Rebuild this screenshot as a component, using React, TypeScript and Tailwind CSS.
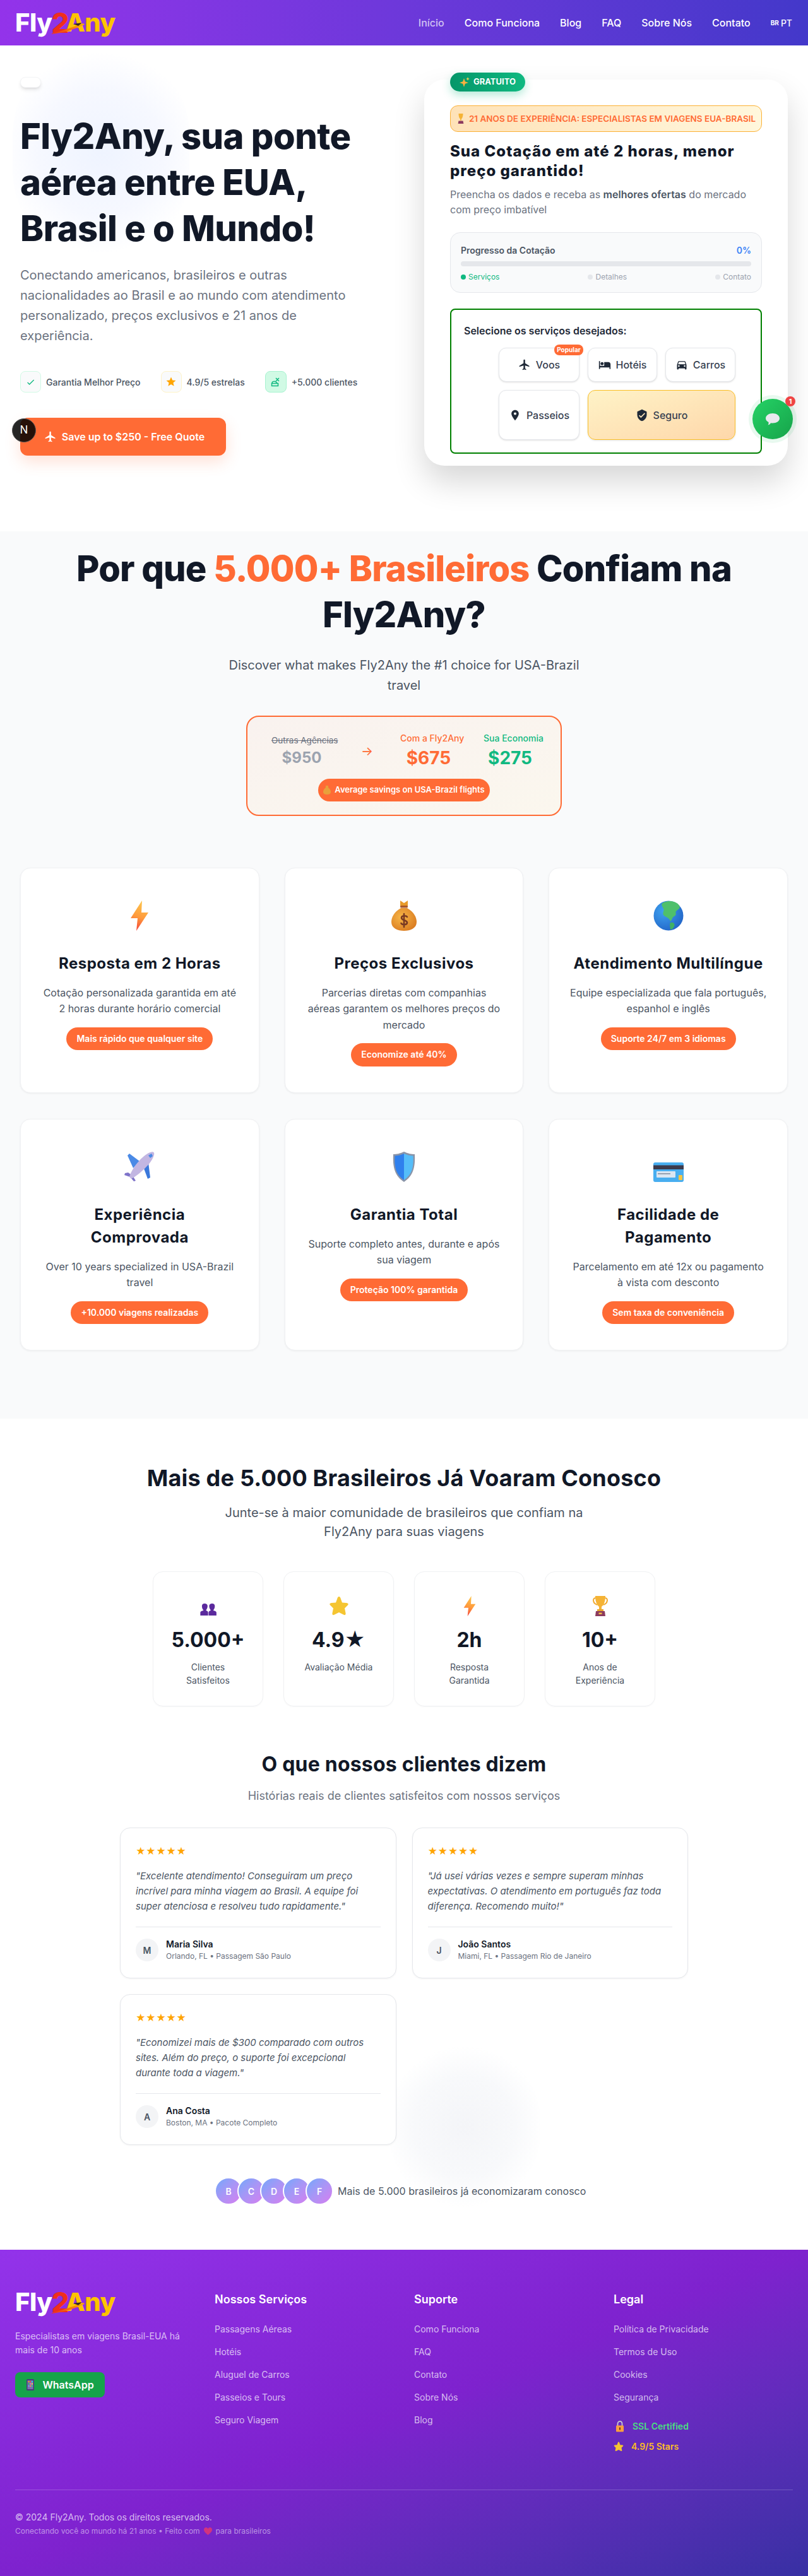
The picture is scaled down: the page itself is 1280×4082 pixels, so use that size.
import { MdFlight, MdHotel, MdDirectionsCar, MdPlace, MdVerifiedUser, MdCheck, MdStar } from "react-icons/md"

/* ---------- drawn emoji ---------- */
const Bolt = ({ id, size = 48 }: { id: string; size?: number }) => (
  <svg width={size} height={size} viewBox="0 0 48 48">
    <defs>
      <linearGradient id={id} x1="0.6" y1="0" x2="0.4" y2="1">
        <stop offset="0" stopColor="#fcc64d" />
        <stop offset="0.55" stopColor="#ff9a3c" />
        <stop offset="1" stopColor="#f4433a" />
      </linearGradient>
    </defs>
    <path d="M28 0 L10 28 L21 28 L19 48 L38 19 L27 19 Z" fill={`url(#${id})`} />
  </svg>
)

const MoneyBag = () => (
  <svg width="48" height="48" viewBox="0 0 48 48">
    <defs>
      <radialGradient id="bag" cx="0.4" cy="0.4" r="0.7">
        <stop offset="0" stopColor="#f7b748" />
        <stop offset="1" stopColor="#d9791f" />
      </radialGradient>
    </defs>
    <path d="M24 4 L18 0 L18 9 L30 9 L30 0 Z" fill="#e79a2b" />
    <rect x="18" y="8" width="12" height="3.500" rx="1.500" fill="#a8572a" />
    <path d="M19 12 C8 18 4 27 4 34 C4 44 14 48 24 48 C34 48 44 44 44 34 C44 27 40 18 29 12 Z" fill="url(#bag)" />
    <path d="M24 21 V42 M29 26 C27.500 23.500 20 23.500 20 27.500 C20 32 29 30.500 29 35 C29 39 21 39 19.500 36" fill="none" stroke="#7a3a22" strokeWidth="2.600" strokeLinecap="round" />
  </svg>
)

const Globe = () => (
  <svg width="48" height="48" viewBox="0 0 48 48">
    <defs>
      <radialGradient id="sea" cx="0.35" cy="0.35" r="0.8">
        <stop offset="0" stopColor="#3fa3f0" />
        <stop offset="1" stopColor="#1f5fc4" />
      </radialGradient>
    </defs>
    <circle cx="24" cy="24" r="23.500" fill="url(#sea)" />
    <path d="M14 4.500 C20 -0.500 36 -1 41 8 C44 13 38 14 36 17 C34 20 38 22 33 25 C29 27 30 31 27 33 C25 27 21 27 17 24 C13 20 18 17 16 13 C15 10 12 8 14 4.500 Z" fill="#4fc06b" />
    <path d="M27 35 C31 34 35 36 33 41 C32 44 29 46 27 46 C27 42 25 38 27 35 Z" fill="#3fb066" />
  </svg>
)

const Plane = () => (
  <svg width="48" height="48" viewBox="0 0 48 48">
    <path d="M24 15 L8 3 L5 6 L14 26 Z" fill="#4a8ae6" />
    <path d="M30 24 L37 43 L41 41 L38 17 Z" fill="#3a78db" />
    <path d="M6 33 L1 34 L0 37 L9 40 L15 47 L18 46 L13 38 Z" fill="#7e73c9" />
    <path d="M8 40 C12 26 28 6 41 1 C46 -1 48 1 47 5 C44 18 24 36 11 43 Z" fill="#c2b6e2" />
    <path d="M38 6 L43 3 L45 7 L41 10 Z" fill="#4a8ae6" />
  </svg>
)

const Shield = () => (
  <svg width="48" height="48" viewBox="0 0 48 48">
    <path d="M24 0 C31 3 35 4 41 4 C42 24 39 38 24 48 C9 38 6 24 7 4 C13 4 17 3 24 0 Z" fill="#8a94a8" />
    <path d="M24 3 V45 C11 36 8.500 24 9.500 6.500 C14 6.500 19 5.500 24 3 Z" fill="#2f80ed" />
    <path d="M24 3 V45 C37 36 39.500 24 38.500 6.500 C34 6.500 29 5.500 24 3 Z" fill="#55bdf9" />
  </svg>
)

const CreditCard = () => (
  <svg width="48" height="48" viewBox="0 0 48 48">
    <rect x="0" y="17" width="48" height="31" rx="3" fill="#48aef0" />
    <rect x="0" y="21.500" width="48" height="6.500" fill="#3c3a4c" />
    <rect x="5" y="31" width="30" height="10" rx="1" fill="#dbe6f2" />
    <rect x="7" y="34" width="20" height="1.800" fill="#8e99aa" />
    <rect x="40" y="37" width="6" height="8" rx="1" fill="#f5c542" />
  </svg>
)

const People = () => (
  <svg width="32" height="32" viewBox="0 0 32 32">
    <g transform="translate(2.500 10) scale(0.85 0.68)">
      <path d="M1 31 V24 C1 21 4 20 7 19 C5 16 4 13 4 9 C4 5 6 3 9 3 C12 3 14.500 5 14.500 9 C14.500 13 13 16 11.500 19 C14 20 15.500 21 15.500 24 V31 Z" fill="#5b2a9d" />
      <path d="M16.500 31 V24 C16.500 21 18 20 20.500 19 C19 16 17.500 13 17.500 9 C17.500 5 20 3 23 3 C26 3 28 5 28 9 C28 13 27 16 25 19 C28 20 31 21 31 24 V31 Z" fill="#5b2a9d" />
    </g>
  </svg>
)

const BigStar = ({ size = 32 }: { size?: number }) => (
  <svg width={size} height={size} viewBox="0 0 32 32">
    <path d="M16 1 C17.500 1 18 2 19 5 L21 10.500 L27.500 11 C30.500 11.300 31.500 12.500 30 14.500 L25 19.500 L26.500 27 C27 30 25.500 31 23 29.500 L16 26 L9 29.500 C6.500 31 5 30 5.500 27 L7 19.500 L2 14.500 C0.500 12.500 1.500 11.300 4.500 11 L11 10.500 L13 5 C14 2 14.500 1 16 1 Z" fill="#f5c531" />
  </svg>
)

const Trophy = () => (
  <svg width="32" height="32" viewBox="0 0 32 32">
    <path d="M9 3 C3 3 4 12 11 14 M23 3 C29 3 28 12 21 14" fill="none" stroke="#f0a92e" strokeWidth="2" />
    <path d="M8 0 H24 C24 10 21 15 18 17 L18 22 H14 L14 17 C11 15 8 10 8 0 Z" fill="#f5b335" />
    <rect x="11" y="21" width="10" height="3" fill="#e9a62c" />
    <path d="M9 24 H23 L24 32 H8 Z" fill="#8c3b5e" />
    <rect x="13.500" y="26.500" width="5" height="2.500" fill="#f0c04a" />
  </svg>
)

const SmallTrophy = () => (
  <svg width="14" height="16" viewBox="0 0 32 32" preserveAspectRatio="none">
    <path d="M8 0 H24 C24 10 21 15 18 17 L18 22 H14 L14 17 C11 15 8 10 8 0 Z" fill="#f5b335" />
    <path d="M8 23 H24 L26 32 H6 Z" fill="#8c3b5e" />
  </svg>
)

const Sparkles = () => (
  <svg width="16" height="16" viewBox="0 0 16 16">
    <path d="M7 2 L8.800 7.200 L14 9 L8.800 10.800 L7 16 L5.200 10.800 L0 9 L5.200 7.200 Z" fill="#fbb040" />
    <path d="M13 0 L13.800 2.200 L16 3 L13.800 3.800 L13 6 L12.200 3.800 L10 3 L12.200 2.200 Z" fill="#fcd34d" />
  </svg>
)

const Bubble = () => (
  <svg width="24" height="24" viewBox="0 0 24 24">
    <path d="M12 3 C18 3 23 6.500 23 11 C23 15.500 18 18.500 12 18.500 C11 18.500 10 18.400 9 18.200 C8 20 6.500 21 4.500 21.500 C5.500 20 5.800 18.500 5.500 17 C2.800 15.600 1 13.500 1 11 C1 6.500 6 3 12 3 Z" fill="#e8e9ee" />
  </svg>
)

const Lock = () => (
  <svg width="14" height="18" viewBox="0 0 14 18">
    <path d="M3.500 8 V5 C3.500 -0.500 10.500 -0.500 10.500 5 V8" fill="none" stroke="#c9cbd1" strokeWidth="1.800" />
    <rect x="1" y="7.500" width="12" height="10" rx="1" fill="#f9a03f" />
    <rect x="6" y="10.500" width="2" height="4" fill="#6b3a1e" />
  </svg>
)

const Phone = () => (
  <svg width="14" height="18" viewBox="0 0 14 18">
    <rect x="1" y="0" width="12" height="18" rx="1.500" fill="#49397c" />
    <rect x="2.500" y="2" width="9" height="14" fill="#7c6fb0" />
    <rect x="3.500" y="3" width="2" height="2" fill="#f59e0b" />
    <rect x="6.200" y="3" width="2" height="2" fill="#ef4444" />
    <rect x="9" y="3" width="2" height="2" fill="#22d3ee" />
    <rect x="3.500" y="6.500" width="2" height="2" fill="#22c55e" />
    <rect x="6.200" y="6.500" width="2" height="2" fill="#f472b6" />
    <rect x="9" y="6.500" width="2" height="2" fill="#fde047" />
    <rect x="3.500" y="10" width="2" height="2" fill="#60a5fa" />
    <rect x="6.200" y="10" width="2" height="2" fill="#fb923c" />
    <rect x="9" y="10" width="2" height="2" fill="#34d399" />
  </svg>
)

const Heart = () => (
  <svg width="13" height="12" viewBox="0 0 13 12">
    <path d="M6.500 12 C2 8.500 0 6.500 0 3.500 C0 1.300 1.700 0 3.300 0 C4.700 0 5.800 0.800 6.500 2 C7.200 0.800 8.300 0 9.700 0 C11.300 0 13 1.300 13 3.500 C13 6.500 11 8.500 6.500 12 Z" fill="#d1347f" />
  </svg>
)

/* logo is a picture in the site, here text + swoosh */
const Logo = ({ id }: { id: string }) => (
  <div className="relative flex items-center h-9 w-[158px] font-extrabold text-[40px] tracking-[-0.500px] leading-none">
    <span className="text-white">Fly</span>
    <span className="text-[#ef2f1c] text-[44px] -ml-px">2</span>
    <span className="text-[#fdc300] -ml-[5px]">Any</span>
    <svg className="absolute left-[56px] top-[14px]" width="56" height="22" viewBox="0 0 56 22">
      <defs>
        <linearGradient id={id} x1="0" y1="1" x2="1" y2="0">
          <stop offset="0" stopColor="#ef2f1c" />
          <stop offset="1" stopColor="#fdb400" />
        </linearGradient>
      </defs>
      <path d="M2 21 C16 18 32 12 52 5 L54 7 C38 14 22 20 2 22 Z" fill={`url(#${id})`} />
      <path d="M36 6 L50 4 L44 9 Z" fill="#3a2a1a" />
    </svg>
  </div>
)

const navLinks = ["Início", "Como Funciona", "Blog", "FAQ", "Sobre Nós", "Contato"]

const features = [
  { icon: <Bolt id="bolt-a" />, title: "Resposta em 2 Horas", text: "Cotação personalizada garantida em até 2 horas durante horário comercial", tag: "Mais rápido que qualquer site" },
  { icon: <MoneyBag />, title: "Preços Exclusivos", text: "Parcerias diretas com companhias aéreas garantem os melhores preços do mercado", tag: "Economize até 40%" },
  { icon: <Globe />, title: "Atendimento Multilíngue", text: "Equipe especializada que fala português, espanhol e inglês", tag: "Suporte 24/7 em 3 idiomas" },
  { icon: <Plane />, title: "Experiência\nComprovada", text: "Over 10 years specialized in USA-Brazil travel", tag: "+10.000 viagens realizadas" },
  { icon: <Shield />, title: "Garantia Total", text: "Suporte completo antes, durante e após sua viagem", tag: "Proteção 100% garantida" },
  { icon: <CreditCard />, title: "Facilidade de\nPagamento", text: "Parcelamento em até 12x ou pagamento à vista com desconto", tag: "Sem taxa de conveniência" },
]

const stats = [
  { icon: <People />, value: "5.000+", label: "Clientes Satisfeitos" },
  { icon: <BigStar />, value: "4.9★", label: "Avaliação Média" },
  { icon: <Bolt id="bolt-b" size={32} />, value: "2h", label: "Resposta Garantida" },
  { icon: <Trophy />, value: "10+", label: "Anos de Experiência" },
]

const reviews = [
  { quote: "\"Excelente atendimento! Conseguiram um preço incrível para minha viagem ao Brasil. A equipe foi super atenciosa e resolveu tudo rapidamente.\"", name: "Maria Silva", info: "Orlando, FL • Passagem São Paulo" },
  { quote: "\"Já usei várias vezes e sempre superam minhas expectativas. O atendimento em português faz toda diferença. Recomendo muito!\"", name: "João Santos", info: "Miami, FL • Passagem Rio de Janeiro" },
  { quote: "\"Economizei mais de $300 comparado com outros sites. Além do preço, o suporte foi excepcional durante toda a viagem.\"", name: "Ana Costa", info: "Boston, MA • Pacote Completo" },
]

const footerCols = [
  { title: "Nossos Serviços", links: ["Passagens Aéreas", "Hotéis", "Aluguel de Carros", "Passeios e Tours", "Seguro Viagem"] },
  { title: "Suporte", links: ["Como Funciona", "FAQ", "Contato", "Sobre Nós", "Blog"] },
  { title: "Legal", links: ["Política de Privacidade", "Termos de Uso", "Cookies", "Segurança"] },
]

const ServiceBtn = ({ icon, label, className }: { icon: React.ReactNode; label: string; className: string }) => (
  <div className={`relative flex items-center justify-center gap-2 rounded-xl text-[16px] font-medium text-[#374151] ${className}`}>
    {icon}
    {label}
  </div>
)

export default function App() {
  return (
    <div className="relative w-[1280px] h-[4082px] overflow-hidden bg-white font-['Inter',sans-serif]">
      {/* HEADER */}
      <header className="h-[72px] flex items-center justify-between pl-6 pr-[25px] bg-gradient-to-r from-[#9333ea] to-[#4338ca]">
        <Logo id="swoosh-top" />
        <nav className="flex items-center gap-8 text-[16px] font-medium text-white">
          {navLinks.map((l, i) => (
            <span key={l} className={i === 0 ? "text-white/70" : ""}>{l}</span>
          ))}
          <span className="text-[14px] flex items-center gap-[3px]"><span className="text-[10px] font-bold">BR</span> PT</span>
        </nav>
      </header>

      {/* HERO */}
      <section className="relative flex gap-16 px-8 pt-[50px] h-[770px]">
        <div className="absolute left-[20px] top-[0px] w-[280px] h-[340px] rounded-full bg-[radial-gradient(circle,#eff4ff_0%,#f6f8ff_45%,#ffffff_72%)]" />
        <div className="relative w-[576px]">
          <div className="w-[33px] h-[17px] rounded-lg bg-white border border-[#f3f4f6] shadow-md" />
          <h1 className="mt-[41px] text-[56px] leading-[72.800px] font-extrabold tracking-[-0.500px] text-[#111827]">
            Fly2Any, sua ponte aérea entre EUA, Brasil e o Mundo!
          </h1>
          <p className="mt-[22px] max-w-[540px] text-[20px] leading-8 text-[#6b7280]">
            Conectando americanos, brasileiros e outras nacionalidades ao Brasil e ao mundo com atendimento personalizado, preços exclusivos e 21 anos de experiência.
          </p>
          <div className="mt-10 flex items-center gap-8 text-[14px] font-medium text-[#4b5563]">
            <div className="flex items-center gap-2">
              <span className="w-[33px] h-[34px] rounded-lg border border-[#d1fae5] bg-[#f9fafb] flex items-center justify-center"><MdCheck className="text-[#10b981]" size={15} /></span>
              Garantia Melhor Preço
            </div>
            <div className="flex items-center gap-2">
              <span className="w-[33px] h-[34px] rounded-lg border border-[#fef3c7] bg-[#f9fafb] flex items-center justify-center"><MdStar className="text-[#ffa500]" size={18} /></span>
              4.9/5 estrelas
            </div>
            <div className="flex items-center gap-2">
              <span className="w-[34px] h-[34px] rounded-lg border border-[#a7f3d0] bg-[#d1fae5] flex items-center justify-center">
                <svg width="16" height="18" viewBox="0 0 16 18" fill="none" stroke="#10b981" strokeWidth="1.500">
                  <path d="M2 11 C2 8 7 7 10 11 M1.500 11.500 H11.500 V15.500 H1.500 Z M8 3 L13 8 M13 3 L8 8" />
                </svg>
              </span>
              +5.000 clientes
            </div>
          </div>
          <button className="mt-10 w-[326px] h-[60px] rounded-xl bg-[#ff6b35] shadow-[0_10px_25px_rgba(255,107,53,0.2)] flex items-center justify-center gap-2 pl-[4px] text-[16px] font-semibold text-white">
            <MdFlight size={20} />
            Save up to $250 - Free Quote
          </button>
        </div>

        <div className="relative w-[576px] h-[612px] mt-1 rounded-[32px] bg-white shadow-[0_25px_50px_rgba(0,0,0,0.16)] px-[41px] pt-[41px]">
          <div className="absolute left-[41px] -top-[11px] w-[119px] h-[30px] rounded-full bg-gradient-to-r from-[#059669] to-[#10b981] shadow-[0_6px_14px_rgba(16,185,129,0.3)] flex items-center justify-center gap-1.5 text-[13px] font-bold text-white">
            <Sparkles />
            GRATUITO
          </div>
          <div className="h-[42px] rounded-xl border border-[#fbb034] bg-gradient-to-r from-[#fee2b8] to-[#fff7dc] flex items-center justify-center gap-1.5 text-[13.500px] font-semibold text-[#ff6b35] whitespace-nowrap">
            <SmallTrophy />
            21 ANOS DE EXPERIÊNCIA: ESPECIALISTAS EM VIAGENS EUA-BRASIL
          </div>
          <h3 className="mt-[15px] text-[24px] leading-[31.200px] font-extrabold tracking-[1px] text-[#111827]">
            Sua Cotação em até 2 horas, menor preço garantido!
          </h3>
          <p className="mt-[10px] text-[16px] leading-6 text-[#6b7280]">
            Preencha os dados e receba as <strong className="font-semibold text-[#4b5563]">melhores ofertas</strong> do mercado com preço imbatível
          </p>
          <div className="mt-6 h-[96px] rounded-2xl border border-[#e5e7eb] bg-[#f9fafb] px-[16px] pt-[17px]">
            <div className="flex justify-between text-[14px] leading-[21px] font-semibold">
              <span className="text-[#4b5563]">Progresso da Cotação</span>
              <span className="text-[#3b82f6]">0%</span>
            </div>
            <div className="mt-[7px] h-2 rounded bg-[#e5e7eb]" />
            <div className="mt-[8px] flex justify-between text-[12px] leading-[18px]">
              <span className="flex items-center gap-1 text-[#10b981]"><span className="w-2 h-2 rounded-full bg-[#10b981]" />Serviços</span>
              <span className="flex items-center gap-1 text-[#9ca3af]"><span className="w-2 h-2 rounded-full bg-[#e5e7eb]" />Detalhes</span>
              <span className="flex items-center gap-1 text-[#9ca3af]"><span className="w-2 h-2 rounded-full bg-[#e5e7eb]" />Contato</span>
            </div>
          </div>
          <div className="mt-[25px] h-[230px] rounded-lg border-2 border-[#008000] pl-[20px] pt-[21px]">
            <div className="text-[16px] leading-6 font-semibold text-[#1f2937]">Selecione os serviços desejados:</div>
            <div className="mt-[15px] ml-[55px] grid grid-cols-[128px_110px_111px] grid-rows-[54px_79px] gap-[13px]">
              <ServiceBtn icon={<MdFlight size={20} className="text-[#1f2937]" />} label="Voos" className="bg-white border border-[#e5e7eb] shadow-sm" />
              <ServiceBtn icon={<MdHotel size={20} className="text-[#1f2937]" />} label="Hotéis" className="bg-white border border-[#e5e7eb] shadow-sm" />
              <ServiceBtn icon={<MdDirectionsCar size={20} className="text-[#1f2937]" />} label="Carros" className="bg-white border border-[#e5e7eb] shadow-sm" />
              <ServiceBtn icon={<MdPlace size={20} className="text-[#1f2937]" />} label="Passeios" className="bg-white border border-[#e5e7eb] shadow-sm" />
              <ServiceBtn icon={<MdVerifiedUser size={20} className="text-[#1f2937]" />} label="Seguro" className="col-span-2 bg-gradient-to-br from-[#fef3c7] to-[#fed7aa] border border-[#fbbf24] shadow-sm" />
            </div>
          </div>
          {/* popular tag sits over the first button */}
          <div className="absolute left-[206px] top-[420px] w-[46px] h-[17px] rounded-lg bg-[#ff6b35] flex items-center justify-center text-[10px] font-bold text-white">Popular</div>
        </div>
      </section>

      {/* WHY SECTION */}
      <section className="bg-[#f9fafb] h-[1406px] pt-[23px] px-8">
        <h2 className="text-center text-[56px] leading-[72.800px] font-extrabold tracking-[-0.800px] text-[#111827]">
          Por que <span className="text-[#ff6b35]">5.000+ Brasileiros</span> Confiam na Fly2Any?
        </h2>
        <p className="mt-[27px] mx-auto max-w-[600px] text-center text-[20px] leading-8 text-[#4b5563]">
          Discover what makes Fly2Any the #1 choice for USA-Brazil travel
        </p>
        <div className="mt-8 mx-auto w-[500px] h-[159px] rounded-[20px] border-2 border-[#ff6b35] bg-gradient-to-br from-[#f9f2ef] to-[#fbf7ee] relative">
          <div className="flex items-start pt-[24px]">
            <div className="ml-[38px] w-[96px] text-center pt-[3px]">
              <div className="text-[13.500px] leading-5 line-through text-[#6b7280] whitespace-nowrap">Outras Agências</div>
              <div className="text-[24px] leading-8 mt-[2px] font-bold text-[#9ca3af]">$950</div>
            </div>
            <div className="ml-[46px] w-4 mt-[18px] text-[20px] leading-6 text-[#ff6b35]">→</div>
            <div className="ml-[46px] w-[90px] text-center">
              <div className="text-[14px] leading-5 font-medium text-[#ff6b35] whitespace-nowrap">Com a Fly2Any</div>
              <div className="text-[28px] leading-9 mt-[3px] font-bold text-[#ff6b35]">$675</div>
            </div>
            <div className="ml-[42px] w-[84px] text-center">
              <div className="text-[14px] leading-5 font-medium text-[#10b981] whitespace-nowrap">Sua Economia</div>
              <div className="text-[28px] leading-9 mt-[3px] font-bold text-[#10b981]">$275</div>
            </div>
          </div>
          <div className="absolute left-[112px] top-[98px] w-[272px] h-[36px] rounded-full bg-[#ff6b35] flex items-center justify-center gap-1.5 text-[13px] font-semibold text-white whitespace-nowrap">
            <svg width="12" height="14" viewBox="0 0 12 14"><path d="M4 3 L4 0 L8 0 L8 3 C11 5 12 8 12 10 C12 13 9 14 6 14 C3 14 0 13 0 10 C0 8 1 5 4 3 Z" fill="#e9a03b" /></svg>
            Average savings on USA-Brazil flights
          </div>
        </div>
        <div className="mt-[82px] grid grid-cols-3 gap-x-10 gap-y-[41px]">
          {features.map((f) => (
            <div key={f.title} className="rounded-2xl bg-white border border-[#f0f1f3] shadow-[0_1px_3px_rgba(0,0,0,0.06)] px-8 pt-10 pb-[41px] text-center">
              <div className="h-[77px] flex items-start justify-center pt-[11px]">{f.icon}</div>
              <h3 className="mt-4 whitespace-pre-line text-[24px] leading-9 font-bold tracking-[0.500px] text-[#111827]">{f.title}</h3>
              <p className="mt-4 text-[16px] leading-[25.600px] text-[#4b5563]">{f.text}</p>
              <span className="mt-4 inline-block rounded-full bg-[#ff6b35] px-4 py-[7px] text-[14px] leading-[22.400px] font-semibold text-white">{f.tag}</span>
            </div>
          ))}
        </div>
      </section>

      {/* SOCIAL PROOF */}
      <section className="relative h-[1317px] pt-[70px]">
        <div className="absolute left-[616px] top-[992px] w-[240px] h-[260px] rounded-full bg-[radial-gradient(circle,#f4f5f8_0%,#f8f9fb_45%,#ffffff_72%)]" />
        <div className="relative">
          <h2 className="text-center text-[36px] leading-[48px] font-bold tracking-[0.200px] text-[#111827]">Mais de 5.000 Brasileiros Já Voaram Conosco</h2>
          <p className="mt-[16px] mx-auto max-w-[600px] text-center text-[20px] leading-[30px] text-[#4b5563]">
            Junte-se à maior comunidade de brasileiros que confiam na Fly2Any para suas viagens
          </p>
          <div className="mt-12 flex justify-center gap-8">
            {stats.map((s) => (
              <div key={s.value} className="w-[175px] h-[214px] rounded-2xl border border-[#f0f1f3] shadow-[0_1px_2px_rgba(0,0,0,0.04)] px-6 pt-[38px] text-center">
                <div className="flex justify-center h-8">{s.icon}</div>
                <div className="mt-[14px] text-[32px] leading-[48px] font-bold text-[#111827]">{s.value}</div>
                <div className="mt-[8px] text-[14px] leading-[21px] text-[#4b5563]">{s.label}</div>
              </div>
            ))}
          </div>
          <h2 className="mt-[68px] text-center text-[32px] leading-[48px] font-bold tracking-[0.200px] text-[#111827]">O que nossos clientes dizem</h2>
          <p className="mt-[12px] text-center text-[18px] leading-[27px] text-[#6b7280]">Histórias reais de clientes satisfeitos com nossos serviços</p>
          <div className="mt-[37px] mx-auto w-[900px] grid grid-cols-2 gap-x-[25px] gap-y-[25px]">
            {reviews.map((r) => (
              <div key={r.name} className="rounded-2xl bg-white border border-[#e5e7eb] shadow-[0_1px_3px_rgba(0,0,0,0.05)] px-6 pt-6 pb-[25px]">
                <div className="text-[15px] leading-[26px] tracking-[0.400px] text-[#ffa500]">★★★★★</div>
                <p className="mt-[14px] text-[15px] leading-6 italic text-[#4b5563]">{r.quote}</p>
                <div className="mt-5 pt-[17px] border-t border-[#e5e7eb] flex items-center gap-3">
                  <span className="w-9 h-9 rounded-full bg-[#f3f4f6] flex items-center justify-center text-[14px] font-semibold text-[#4b5563]">{r.name[0]}</span>
                  <div>
                    <div className="text-[14px] leading-[20px] font-semibold text-[#111827]">{r.name}</div>
                    <div className="text-[12px] leading-[18px] text-[#6b7280]">{r.info}</div>
                  </div>
                </div>
              </div>
            ))}
          </div>
          <div className="mt-[51px] ml-[340px] flex items-center">
            {["B", "C", "D", "E", "F"].map((l, i) => (
              <span key={l} className={`w-11 h-11 rounded-full border-2 border-white bg-gradient-to-br from-[#6ea8fb] to-[#d67cf0] flex items-center justify-center text-[14px] font-semibold text-white ${i > 0 ? "-ml-2" : ""}`}>{l}</span>
            ))}
            <span className="ml-[7px] text-[16px] text-[#4b5563]">Mais de 5.000 brasileiros já economizaram conosco</span>
          </div>
        </div>
      </section>

      {/* FOOTER */}
      <footer className="h-[517px] bg-gradient-to-br from-[#9333ea] via-[#7e22ce] to-[#3730a3] px-6 pt-[65px]">
        <div className="h-[315px] grid grid-cols-4 gap-8">
          <div>
            <Logo id="swoosh-bottom" />
            <p className="mt-[25px] text-[14px] leading-[22.400px] text-white/70">Especialistas em viagens Brasil-EUA há mais de 10 anos</p>
            <div className="mt-[23px] w-[142px] h-10 rounded-lg bg-[#16a34a] flex items-center justify-center gap-[12px] text-[16px] font-semibold text-white">
              <Phone />
              WhatsApp
            </div>
          </div>
          {footerCols.map((c) => (
            <div key={c.title}>
              <h4 className="text-[18px] leading-[27px] font-semibold text-white">{c.title}</h4>
              <ul className="mt-[23px] flex flex-col gap-[14px] text-[14px] leading-[22px] text-white/70">
                {c.links.map((l) => <li key={l}>{l}</li>)}
              </ul>
              {c.title === "Legal" && (
                <div className="mt-[24px] flex flex-col gap-[10px] text-[14px] leading-[22px] font-semibold">
                  <div className="flex items-center gap-3 text-[#4ade80]"><span className="ml-[3px] mr-[1px] flex"><Lock /></span>SSL Certified</div>
                  <div className="flex items-center gap-3 text-[#fbbf24]"><BigStar size={16} />4.9/5 Stars</div>
                </div>
              )}
            </div>
          ))}
        </div>
        <div className="border-t border-white/20 pt-[32px]">
          <div className="text-[14px] leading-[22px] text-white/70">© 2024 Fly2Any. Todos os direitos reservados.</div>
          <div className="mt-[1px] flex items-center gap-[6px] text-[12px] leading-[20px] text-white/50">
            Conectando você ao mundo há 21 anos • Feito com <Heart /> para brasileiros
          </div>
        </div>
      </footer>

      {/* floating bits */}
      <div className="absolute left-[19px] top-[663px] w-[38px] h-[38px] rounded-full bg-black/85 border border-[#555] flex items-center justify-center text-[17px] text-white">N</div>
      <div className="absolute left-[1192px] top-[632px] w-16 h-16 rounded-full bg-gradient-to-br from-[#25d366] to-[#16a34a] shadow-[0_0_0_6px_rgba(34,197,94,0.1)] flex items-center justify-center">
        <Bubble />
        <span className="absolute -top-[4px] right-[-4px] w-4 h-4 rounded-full bg-[#ef4444] flex items-center justify-center text-[11px] font-bold text-white">1</span>
      </div>
    </div>
  )
}
